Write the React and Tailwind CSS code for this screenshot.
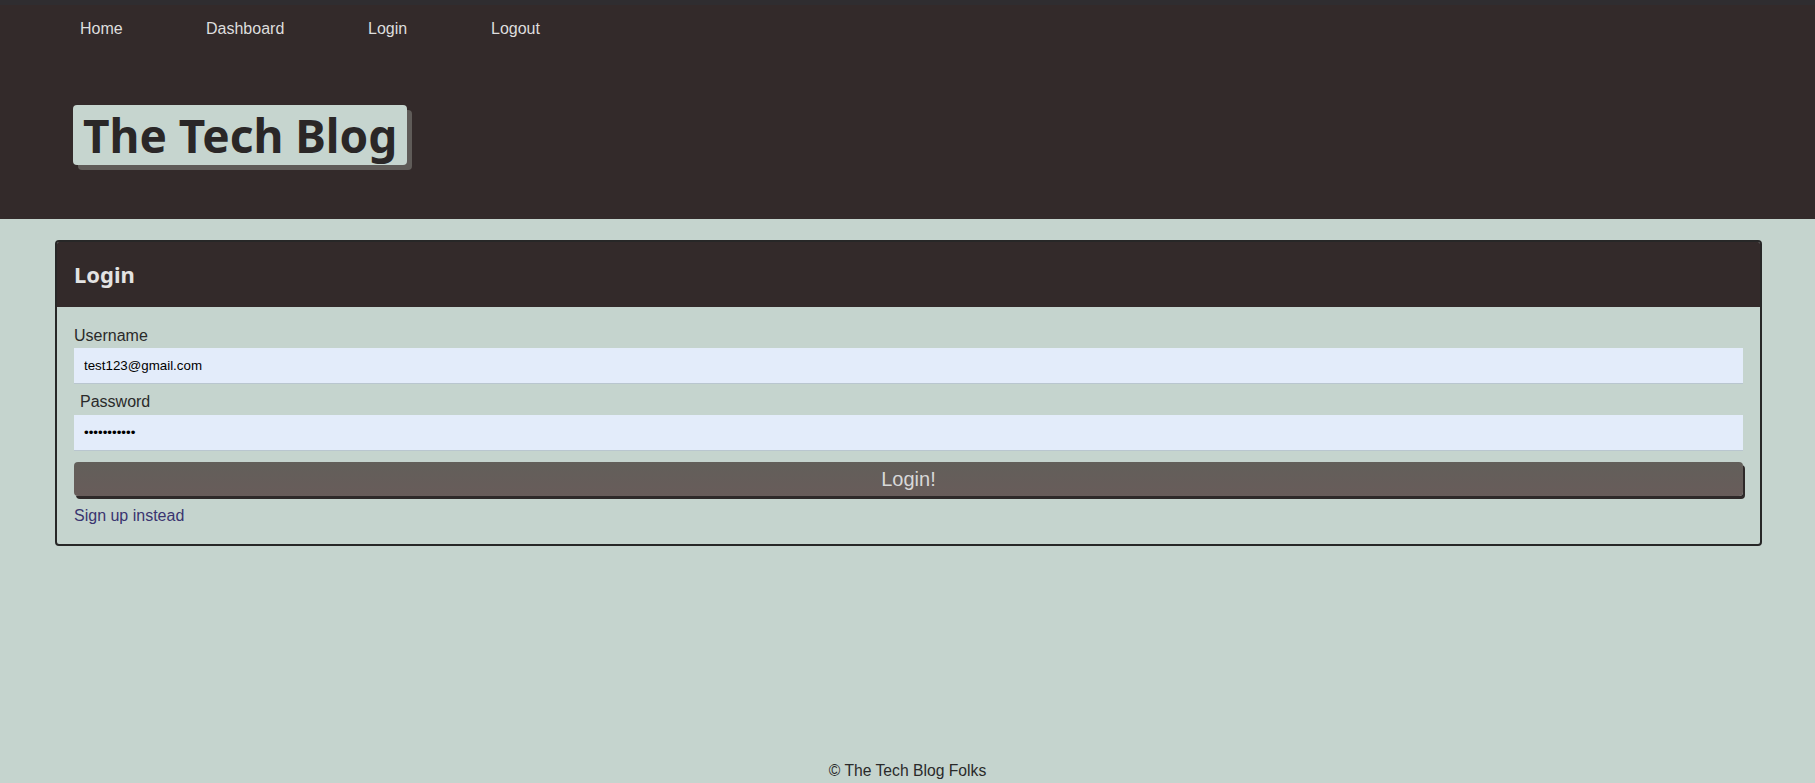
import React from "react";

const sans = "font-['Liberation_Sans',Arial,sans-serif]";
const heading = "font-['Noto_Sans','Liberation_Sans',sans-serif]";

function Nav() {
  // fixed slots so the links land where the original ones do
  const links = [
    { label: "Home", w: "w-[126px]" },
    { label: "Dashboard", w: "w-[162px]" },
    { label: "Login", w: "w-[123px]" },
    { label: "Logout", w: "w-[80px]" },
  ];
  return (
    <nav className="flex pl-[80px] pt-[12px]">
      {links.map((l) => (
        <div key={l.label} className={l.w}>
          <a href="#" className="text-[16px] leading-[24px] text-[#dedede]">
            {l.label}
          </a>
        </div>
      ))}
    </nav>
  );
}

export default function App() {
  return (
    <div className={`min-h-screen flex flex-col bg-[#c5d4ce] ${sans}`}>
      {/* header */}
      <header className="bg-[#332a2a] border-t-[5px] border-[#2f2d30] h-[219px]">
        <Nav />
        <div className="pl-[73px] pt-[64px]">
          <h1
            className={`inline-block bg-[#c6d5cf] text-[#2a2727] font-bold text-[46px] leading-[60px] h-[60px] px-[10px] rounded-[4px] shadow-[5px_5px_0_#5f5b58] ${heading}`}
          >
            The Tech Blog
          </h1>
        </div>
      </header>

      {/* login card */}
      <main className="pl-[55px] pr-[53px] pt-[21px]">
        <div className="border-2 border-[#272727] rounded-[4px] overflow-hidden">
          <div className="bg-[#332a2a] h-[65px] flex items-center px-[17px]">
            <h2 className={`text-[22px] font-bold text-[#e3e3e3] ${heading}`}>Login</h2>
          </div>
          <form className="flex flex-col pt-[19px] pb-[18px] px-[17px]">
            <label className="text-[16px] leading-[20px] text-[#2a2a2a]">Username</label>
            <input
              type="text"
              defaultValue="test123@gmail.com"
              className="mt-[2px] h-[36px] w-full bg-[#e3ecfa] border-b border-[#b9c6cf] px-[10px] text-[13.33px] text-black outline-none"
            />
            <label className="mt-[8px] pl-[6px] text-[16px] leading-[20px] text-[#2a2a2a]">
              Password
            </label>
            <input
              type="password"
              defaultValue="abcdefghijk"
              className="mt-[3px] h-[36px] w-full bg-[#e3ecfa] border-b border-[#b9c6cf] px-[10px] text-[13.33px] text-black outline-none"
            />
            <button
              type="button"
              className="mt-[11px] h-[34px] w-full rounded-[4px] bg-gradient-to-b from-[#625f5a] to-[#685c5a] text-[20px] text-[#d8d8d8] shadow-[2px_3px_0_#2e2929]"
            >
              Login!
            </button>
            <a href="#" className="mt-[10px] text-[16px] leading-[20px] text-[#3a3470]">
              Sign up instead
            </a>
          </form>
        </div>
      </main>

      <footer className="mt-auto text-center text-[15.7px] leading-[24px] text-[#2a2a2a]">
        © The Tech Blog Folks
      </footer>
    </div>
  );
}
